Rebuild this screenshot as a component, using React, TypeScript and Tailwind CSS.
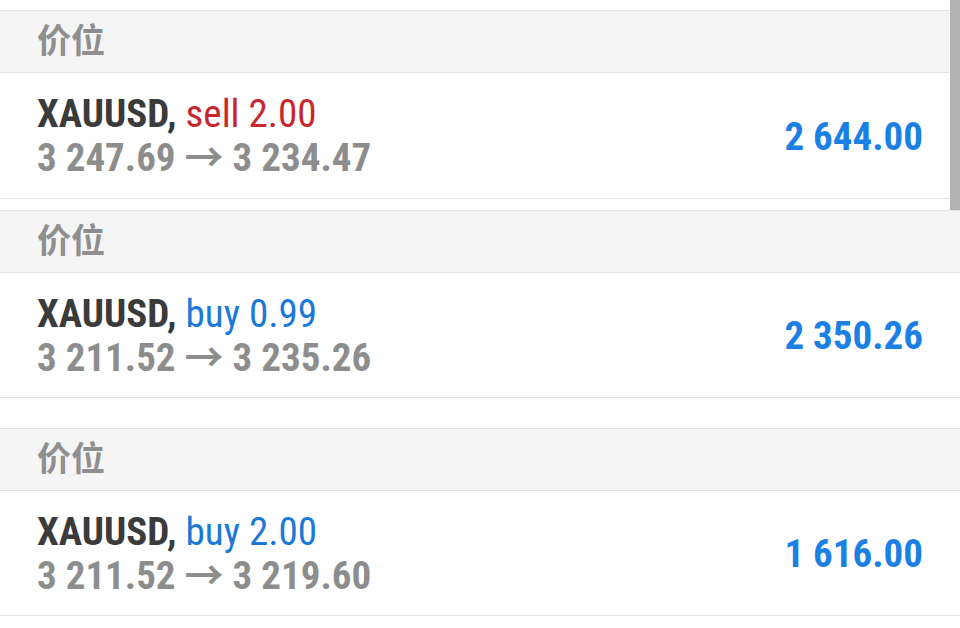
const rows = [
  { side: "sell", lots: "2.00", from: "3 247.69", to: "3 234.47", profit: "2 644.00", rowH: "h-[126px]", gapAfter: "h-[11px]" },
  { side: "buy", lots: "0.99", from: "3 211.52", to: "3 235.26", profit: "2 350.26", rowH: "h-[125px]", gapAfter: "h-[30px]" },
  { side: "buy", lots: "2.00", from: "3 211.52", to: "3 219.60", profit: "1 616.00", rowH: "h-[125px]", gapAfter: "h-[11px]" },
];

type DealProps = { side: string; lots: string; from: string; to: string; profit: string; rowH: string };

function Deal({ side, lots, from, to, profit, rowH }: DealProps) {
  return (
    <div>
      {/* Section header */}
      <div className="flex h-[63px] items-center border-y border-[#e2e2e2] bg-[#f5f5f5] px-[37px]">
        <span className="text-[34px] font-semibold text-[#8f8f8f]">价位</span>
      </div>

      {/* Deal row */}
      <div className={`flex ${rowH} items-center justify-between border-b border-[#e2e2e2] bg-white px-[37px] font-stretch-condensed`}>
        <div className="flex flex-col pt-[1px] leading-[44px]">
          <div className="text-[39px]">
            <span className="font-bold text-[#3b3b3b]">XAUUSD,</span>{" "}
            <span className={side === "sell" ? "text-[#c8262c]" : "text-[#1a78d6]"}>
              {side} {lots}
            </span>
          </div>
          <div className="text-[39px] font-bold text-[#8d8d8d]">
            {from} → {to}
          </div>
        </div>
        <span className="pt-[3px] text-[39px] font-bold text-[#1b7fe3]">{profit}</span>
      </div>
    </div>
  );
}

export default function App() {
  return (
    <div className="relative h-[628px] w-[960px] overflow-hidden bg-white font-['Roboto','Noto_Sans_CJK_SC',sans-serif]">
      <div className="h-[10px]" />
      {rows.map((r, i) => (
        <div key={i}>
          <Deal {...r} />
          <div className={r.gapAfter} />
        </div>
      ))}

      {/* Scrollbar */}
      <div className="absolute right-0 top-0 h-[210px] w-[10px] bg-[#b3b3b3]" />
    </div>
  );
}
